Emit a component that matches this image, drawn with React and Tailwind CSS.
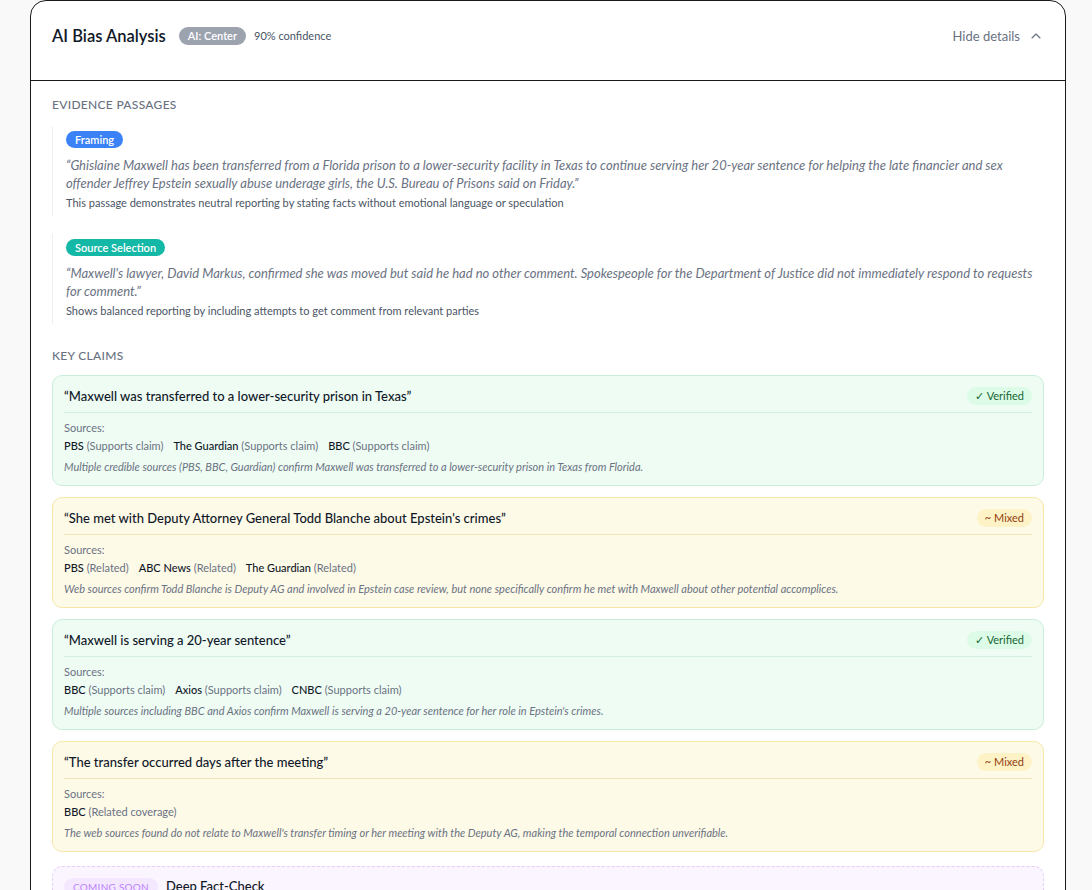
import React from 'react';
import { ChevronUp } from 'lucide-react';

const passages = [
  {
    tag: 'Framing',
    tagClass: 'bg-[#3b82f6]',
    quote:
      '“Ghislaine Maxwell has been transferred from a Florida prison to a lower-security facility in Texas to continue serving her 20-year sentence for helping the late financier and sex offender Jeffrey Epstein sexually abuse underage girls, the U.S. Bureau of Prisons said on Friday.”',
    note: 'This passage demonstrates neutral reporting by stating facts without emotional language or speculation',
  },
  {
    tag: 'Source Selection',
    tagClass: 'bg-[#14b8a6]',
    quote:
      '“Maxwell\'s lawyer, David Markus, confirmed she was moved but said he had no other comment. Spokespeople for the Department of Justice did not immediately respond to requests for comment.”',
    note: 'Shows balanced reporting by including attempts to get comment from relevant parties',
  },
];

const claims = [
  {
    text: '“Maxwell was transferred to a lower-security prison in Texas”',
    status: 'verified',
    sources: [
      ['PBS', 'Supports claim'],
      ['The Guardian', 'Supports claim'],
      ['BBC', 'Supports claim'],
    ],
    note: 'Multiple credible sources (PBS, BBC, Guardian) confirm Maxwell was transferred to a lower-security prison in Texas from Florida.',
  },
  {
    text: '“She met with Deputy Attorney General Todd Blanche about Epstein\'s crimes”',
    status: 'mixed',
    sources: [
      ['PBS', 'Related'],
      ['ABC News', 'Related'],
      ['The Guardian', 'Related'],
    ],
    note: 'Web sources confirm Todd Blanche is Deputy AG and involved in Epstein case review, but none specifically confirm he met with Maxwell about other potential accomplices.',
  },
  {
    text: '“Maxwell is serving a 20-year sentence”',
    status: 'verified',
    sources: [
      ['BBC', 'Supports claim'],
      ['Axios', 'Supports claim'],
      ['CNBC', 'Supports claim'],
    ],
    note: "Multiple sources including BBC and Axios confirm Maxwell is serving a 20-year sentence for her role in Epstein's crimes.",
  },
  {
    text: '“The transfer occurred days after the meeting”',
    status: 'mixed',
    sources: [['BBC', 'Related coverage']],
    note: "The web sources found do not relate to Maxwell's transfer timing or her meeting with the Deputy AG, making the temporal connection unverifiable.",
  },
];

function ClaimCard({ claim }) {
  const verified = claim.status === 'verified';
  return (
    <div
      className={
        verified
          ? 'h-[111px] rounded-[10px] border border-[#c9eed9] bg-[#effcf4] px-[11px] pt-[10px]'
          : 'h-[111px] rounded-[10px] border border-[#f6e7a6] bg-[#fefae8] px-[11px] pt-[10px]'
      }
    >
      <div
        className={
          verified
            ? 'flex h-[27px] items-start justify-between border-b border-[#d3eedf]'
            : 'flex h-[27px] items-start justify-between border-b border-[#f1e6bd]'
        }
      >
        <p className="text-[13px] leading-5 font-medium text-gray-900">{claim.text}</p>
        {verified ? (
          <span className="mt-[1px] rounded-full bg-[#dcfce7] px-[8px] text-[11px] leading-[18px] text-[#166534]">✓ Verified</span>
        ) : (
          <span className="mt-[1px] rounded-full bg-[#fef3c7] px-[8px] text-[11px] leading-[18px] text-[#92400e]">~ Mixed</span>
        )}
      </div>
      <p className="mt-[7px] text-[11px] leading-4 text-gray-500">Sources:</p>
      <div className="mt-[2px] flex h-4 flex-wrap gap-x-[10px] text-[11px] leading-4">
        {claim.sources.map(([name, rel]) => (
          <span key={name}>
            <span className="font-medium text-gray-900">{name}</span>{' '}
            <span className="text-gray-500">({rel})</span>
          </span>
        ))}
      </div>
      <p className="mt-[5px] h-4 text-[11px] leading-4 italic text-gray-500">{claim.note}</p>
    </div>
  );
}

export default function App() {
  return (
    <div className="min-h-screen bg-[#f9f9f9] font-['Lato',sans-serif]">
      <div className="ml-[30px] w-[1036px] rounded-t-[16px] border border-[#1a1a1a] bg-white">
        <div className="flex h-[80px] items-start justify-between border-b border-[#1a1a1a] px-[21px] pt-[24px]">
          <div className="flex items-center">
            <h2 className="text-[16.5px] leading-[22px] font-semibold text-gray-900">AI Bias Analysis</h2>
            <span className="ml-[13px] rounded-full bg-[#9ca3af] px-[9px] text-[11px] leading-[18px] font-semibold text-white">AI: Center</span>
            <span className="ml-[8px] text-[11px] text-gray-600">90% confidence</span>
          </div>
          <button className="flex items-center gap-[8px] text-[13px] leading-[22px] text-gray-500">
            Hide details
            <ChevronUp className="h-4 w-4" strokeWidth={1.75} />
          </button>
        </div>

        <div className="px-[21px] pt-[16px] pb-[40px]">
          <h3 className="text-[12px] leading-4 font-medium uppercase tracking-wide text-gray-500">Evidence Passages</h3>
          <div className="mt-[13px] flex flex-col gap-[18px]">
            {passages.map((p) => (
              <div key={p.tag} className="border-l border-[#eeeeee] pl-[13px] pt-[5px] pb-[5px]">
                <div className="flex">
                  <span className={`rounded-full px-[9px] text-[11px] leading-[17px] font-semibold text-white ${p.tagClass}`}>
                    {p.tag}
                  </span>
                </div>
                <p className="mt-[8px] text-[13px] leading-[18px] italic text-gray-500">{p.quote}</p>
                <p className="mt-[3px] text-[11px] leading-4 text-gray-600">{p.note}</p>
              </div>
            ))}
          </div>

          <h3 className="mt-[24px] text-[12px] leading-4 font-medium uppercase tracking-wide text-gray-500">Key Claims</h3>
          <div className="mt-[11px] flex flex-col gap-[11px]">
            {claims.map((c) => (
              <ClaimCard key={c.text} claim={c} />
            ))}
          </div>

          <div className="mt-[14px] rounded-[10px] border border-dashed border-[#e4cdf7] bg-[#faf5ff] px-[11px] py-[10px]">
            <div className="flex items-center gap-[8px]">
              <span className="rounded-full bg-[#f3e8ff] px-[9px] text-[10px] leading-[18px] uppercase tracking-wide text-[#c084fc]">Coming Soon</span>
              <span className="text-[13px] font-medium text-gray-900">Deep Fact-Check</span>
            </div>
            <p className="mt-[6px] text-[11px] leading-4 text-gray-500">
              Cross-reference every claim against primary sources, court records and official statements.
            </p>
          </div>
        </div>
      </div>
    </div>
  );
}
